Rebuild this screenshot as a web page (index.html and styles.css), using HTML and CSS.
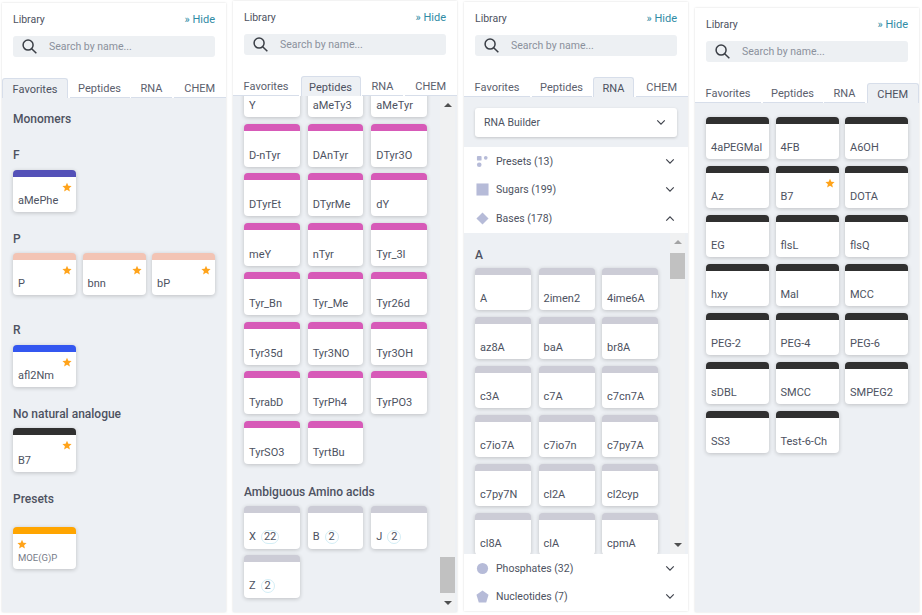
FILE: index.html
```html
<!DOCTYPE html>
<html lang="en">
    <head>
        <meta charset="UTF-8">
        <title>Library</title>
        <link rel="stylesheet" href="styles.css">
    </head>
    <body>
        <svg class="defs">
            <symbol id="star" viewBox="0 0 24 24"><path d="M12 1.5l3.2 7.2 7.8.8-5.9 5.2 1.8 7.8-6.9-4.1-6.9 4.1 1.8-7.8L1 9.5l7.8-.8z"/></symbol>
            <symbol id="search" viewBox="0 0 18 18"><circle cx="7.3" cy="7.3" r="6"/><path d="M11.6 11.6l5.6 5.6"/></symbol>
            <symbol id="down" viewBox="0 0 12 8"><path d="M1.5 1.5L6 6l4.5-4.5"/></symbol>
            <symbol id="up" viewBox="0 0 12 8"><path d="M1.5 6.5L6 2l4.5 4.5"/></symbol>
        </svg>

        <!-- Favorites -->
        <section class="panel panel-favorites">
            <header class="panel-header">
                <div class="title-row"><span>Library</span><a class="hide">» Hide</a></div>
                <div class="search"><svg class="search-icon"><use href="#search"/></svg><span>Search by name...</span></div>
            </header>
            <nav class="tabs">
                <div class="tab active">Favorites</div>
                <div class="tab">Peptides</div>
                <div class="tab">RNA</div>
                <div class="tab">CHEM</div>
            </nav>
            <div class="content fav-content">
                <h3 class="section-title">Monomers</h3>
                <h3 class="group-title first">F</h3>
                <div class="cards wide">
                    <div class="card bar-indigo"><svg class="star"><use href="#star"/></svg><span>aMePhe</span></div>
                </div>
                <h3 class="group-title">P</h3>
                <div class="cards wide">
                    <div class="card bar-salmon"><svg class="star"><use href="#star"/></svg><span>P</span></div>
                    <div class="card bar-salmon"><svg class="star"><use href="#star"/></svg><span>bnn</span></div>
                    <div class="card bar-salmon"><svg class="star"><use href="#star"/></svg><span>bP</span></div>
                </div>
                <h3 class="group-title far">R</h3>
                <div class="cards wide">
                    <div class="card bar-blue"><svg class="star"><use href="#star"/></svg><span>afl2Nm</span></div>
                </div>
                <h3 class="group-title">No natural analogue</h3>
                <div class="cards wide">
                    <div class="card bar-dark tall"><svg class="star"><use href="#star"/></svg><span>B7</span></div>
                </div>
                <h3 class="group-title">Presets</h3>
                <div class="cards wide presets">
                    <div class="card bar-orange preset"><svg class="star left"><use href="#star"/></svg><span>MOE(G)P</span></div>
                </div>
            </div>
        </section>

        <!-- Peptides -->
        <section class="panel panel-peptides">
            <header class="panel-header">
                <div class="title-row"><span>Library</span><a class="hide">» Hide</a></div>
                <div class="search"><svg class="search-icon"><use href="#search"/></svg><span>Search by name...</span></div>
            </header>
            <nav class="tabs">
                <div class="tab">Favorites</div>
                <div class="tab active">Peptides</div>
                <div class="tab">RNA</div>
                <div class="tab">CHEM</div>
            </nav>
            <div class="scroll-area">
                <div class="scroll-list pep-list">
                    <div class="cards narrow pep-cards">
                        <div class="card bar-pink"><span>Y</span></div>
                        <div class="card bar-pink"><span>aMeTy3</span></div>
                        <div class="card bar-pink"><span>aMeTyr</span></div>
                        <div class="card bar-pink"><span>D-nTyr</span></div>
                        <div class="card bar-pink"><span>DAnTyr</span></div>
                        <div class="card bar-pink"><span>DTyr3O</span></div>
                        <div class="card bar-pink"><span>DTyrEt</span></div>
                        <div class="card bar-pink"><span>DTyrMe</span></div>
                        <div class="card bar-pink"><span>dY</span></div>
                        <div class="card bar-pink"><span>meY</span></div>
                        <div class="card bar-pink"><span>nTyr</span></div>
                        <div class="card bar-pink"><span>Tyr_3I</span></div>
                        <div class="card bar-pink"><span>Tyr_Bn</span></div>
                        <div class="card bar-pink"><span>Tyr_Me</span></div>
                        <div class="card bar-pink"><span>Tyr26d</span></div>
                        <div class="card bar-pink"><span>Tyr35d</span></div>
                        <div class="card bar-pink"><span>Tyr3NO</span></div>
                        <div class="card bar-pink"><span>Tyr3OH</span></div>
                        <div class="card bar-pink"><span>TyrabD</span></div>
                        <div class="card bar-pink"><span>TyrPh4</span></div>
                        <div class="card bar-pink"><span>TyrPO3</span></div>
                        <div class="card bar-pink"><span>TyrSO3</span></div>
                        <div class="card bar-pink"><span>TyrtBu</span></div>
                    </div>
                    <h3 class="group-title ambiguous">Ambiguous Amino acids</h3>
                    <div class="cards narrow pep-cards">
                        <div class="card bar-gray"><span>X<b class="count">22</b></span></div>
                        <div class="card bar-gray"><span>B<b class="count">2</b></span></div>
                        <div class="card bar-gray"><span>J<b class="count">2</b></span></div>
                        <div class="card bar-gray"><span>Z<b class="count">2</b></span></div>
                    </div>
                </div>
                <div class="scrollbar">
                    <i class="arrow-up"></i>
                    <div class="track track-end"><div class="thumb"></div></div>
                    <i class="arrow-down"></i>
                </div>
            </div>
        </section>

        <!-- RNA -->
        <section class="panel panel-rna">
            <header class="panel-header">
                <div class="title-row"><span>Library</span><a class="hide">» Hide</a></div>
                <div class="search"><svg class="search-icon"><use href="#search"/></svg><span>Search by name...</span></div>
            </header>
            <nav class="tabs">
                <div class="tab">Favorites</div>
                <div class="tab">Peptides</div>
                <div class="tab active">RNA</div>
                <div class="tab">CHEM</div>
            </nav>
            <div class="builder">
                <div class="dropdown"><span>RNA Builder</span><svg class="chevron"><use href="#down"/></svg></div>
            </div>
            <div class="acc-row">
                <svg class="acc-icon" viewBox="0 0 14 14"><rect x="1" y="1" width="5" height="5" rx="1"/><circle cx="10.5" cy="3" r="2"/><circle cx="3.5" cy="10.5" r="2.5"/></svg>
                <span>Presets (13)</span><svg class="chevron"><use href="#down"/></svg>
            </div>
            <div class="acc-row">
                <svg class="acc-icon" viewBox="0 0 14 14"><rect x="0.5" y="0.5" width="13" height="13"/></svg>
                <span>Sugars (199)</span><svg class="chevron"><use href="#down"/></svg>
            </div>
            <div class="acc-row">
                <svg class="acc-icon" viewBox="0 0 14 14"><path d="M7 0.5L13.5 7 7 13.5 0.5 7z"/></svg>
                <span>Bases (178)</span><svg class="chevron"><use href="#up"/></svg>
            </div>
            <div class="scroll-area rna-area">
                <div class="scroll-list rna-list">
                    <h3 class="group-title rna-title">A</h3>
                    <div class="cards narrow rna-cards">
                        <div class="card bar-gray"><span>A</span></div>
                        <div class="card bar-gray"><span>2imen2</span></div>
                        <div class="card bar-gray"><span>4ime6A</span></div>
                        <div class="card bar-gray"><span>az8A</span></div>
                        <div class="card bar-gray"><span>baA</span></div>
                        <div class="card bar-gray"><span>br8A</span></div>
                        <div class="card bar-gray"><span>c3A</span></div>
                        <div class="card bar-gray"><span>c7A</span></div>
                        <div class="card bar-gray"><span>c7cn7A</span></div>
                        <div class="card bar-gray"><span>c7io7A</span></div>
                        <div class="card bar-gray"><span>c7io7n</span></div>
                        <div class="card bar-gray"><span>c7py7A</span></div>
                        <div class="card bar-gray"><span>c7py7N</span></div>
                        <div class="card bar-gray"><span>cl2A</span></div>
                        <div class="card bar-gray"><span>cl2cyp</span></div>
                        <div class="card bar-gray"><span>cl8A</span></div>
                        <div class="card bar-gray"><span>clA</span></div>
                        <div class="card bar-gray"><span>cpmA</span></div>
                    </div>
                </div>
                <div class="scrollbar">
                    <i class="arrow-up"></i>
                    <div class="track"><div class="thumb"></div></div>
                    <i class="arrow-down"></i>
                </div>
            </div>
            <div class="acc-row">
                <svg class="acc-icon" viewBox="0 0 14 14"><circle cx="7" cy="7" r="6"/></svg>
                <span>Phosphates (32)</span><svg class="chevron"><use href="#down"/></svg>
            </div>
            <div class="acc-row">
                <svg class="acc-icon" viewBox="0 0 14 14"><path d="M7 0.5L13.5 5.2 11 13.5H3L0.5 5.2z"/></svg>
                <span>Nucleotides (7)</span><svg class="chevron"><use href="#down"/></svg>
            </div>
        </section>

        <!-- CHEM -->
        <section class="panel panel-chem">
            <header class="panel-header">
                <div class="title-row"><span>Library</span><a class="hide">» Hide</a></div>
                <div class="search"><svg class="search-icon"><use href="#search"/></svg><span>Search by name...</span></div>
            </header>
            <nav class="tabs">
                <div class="tab">Favorites</div>
                <div class="tab">Peptides</div>
                <div class="tab">RNA</div>
                <div class="tab active">CHEM</div>
            </nav>
            <div class="content chem-content">
                <div class="cards wide chem-cards">
                    <div class="card bar-dark"><span>4aPEGMal</span></div>
                    <div class="card bar-dark"><span>4FB</span></div>
                    <div class="card bar-dark"><span>A6OH</span></div>
                    <div class="card bar-dark"><span>Az</span></div>
                    <div class="card bar-dark"><svg class="star"><use href="#star"/></svg><span>B7</span></div>
                    <div class="card bar-dark"><span>DOTA</span></div>
                    <div class="card bar-dark"><span>EG</span></div>
                    <div class="card bar-dark"><span>flsL</span></div>
                    <div class="card bar-dark"><span>flsQ</span></div>
                    <div class="card bar-dark"><span>hxy</span></div>
                    <div class="card bar-dark"><span>Mal</span></div>
                    <div class="card bar-dark"><span>MCC</span></div>
                    <div class="card bar-dark"><span>PEG-2</span></div>
                    <div class="card bar-dark"><span>PEG-4</span></div>
                    <div class="card bar-dark"><span>PEG-6</span></div>
                    <div class="card bar-dark"><span>sDBL</span></div>
                    <div class="card bar-dark"><span>SMCC</span></div>
                    <div class="card bar-dark"><span>SMPEG2</span></div>
                    <div class="card bar-dark"><span>SS3</span></div>
                    <div class="card bar-dark"><span>Test-6-Ch</span></div>
                </div>
            </div>
        </section>
    </body>
</html>
```

FILE: styles.css
```css
* {
    box-sizing: border-box;
}

html, body {
    height: 100%;
}

body {
    margin: 0;
    padding-left: 2px;
    display: flex;
    align-items: flex-start;
    gap: 7px;
    overflow: hidden;
    background-color: #fff;
    color: #4d5261;
    font-family: Roboto, "Liberation Sans", sans-serif;
    font-size: 11px;
}

.defs {
    display: none;
}

/* panels */
.panel {
    width: 224px;
    display: flex;
    flex-direction: column;
    overflow: hidden;
    background-color: #edf0f4;
    box-shadow: 0 0 2px rgba(0, 0, 0, 0.15);
}

.panel-favorites {
    margin-top: 3px;
    height: 609px;
}

.panel-peptides {
    margin-top: 1px;
    height: 611px;
}

.panel-rna {
    margin-top: 2px;
    height: 609px;
}

.panel-chem {
    margin-top: 8px;
    height: 604px;
}

.panel-header {
    flex: none;
    height: 75px;
    padding: 9px 11px 0;
    background-color: #fff;
}

.title-row {
    display: flex;
    justify-content: space-between;
    align-items: center;
    height: 14px;
    font-size: 10.5px;
}

.hide {
    color: #2f8ba5;
    font-size: 11px;
}

.search {
    display: flex;
    align-items: center;
    height: 21px;
    margin-top: 10px;
    padding-left: 9px;
    background-color: #edf0f3;
    border-radius: 3px;
    color: #8b909c;
    font-size: 10.5px;
}

.search-icon {
    width: 15px;
    height: 15px;
    margin-right: 12px;
    fill: none;
    stroke: #3b3f46;
    stroke-width: 1.8;
}

/* tabs */
.tabs {
    flex: none;
    display: grid;
    grid-template-columns: 66px 60px 41px 1fr;
    gap: 1.5px;
    height: 20px;
    background-color: #fff;
}

.tab {
    display: flex;
    justify-content: center;
    align-items: center;
    padding-top: 2px;
    border-bottom: 1px solid #d7deea;
    color: #5b606d;
    font-size: 11px;
}

.tab.active {
    background-color: #edf0f4;
    border: 1px solid #d7deea;
    border-bottom: none;
    border-radius: 3px 3px 0 0;
    color: #4d5261;
}

/* cards */
.content {
    flex: 1;
    padding: 0 11px;
}

.fav-content {
    padding-top: 14px;
}

.chem-content {
    padding-top: 14px;
}

.section-title,
.group-title {
    margin: 0;
    height: 14px;
    line-height: 14px;
    font-size: 12px;
    font-weight: 500;
}

.group-title {
    margin-top: 20px;
    margin-bottom: 7px;
}

.group-title.first {
    margin-top: 22px;
    margin-bottom: 8px;
}

.group-title.far {
    margin-top: 28px;
    margin-bottom: 8px;
}

.cards {
    display: grid;
    grid-template-columns: repeat(3, 1fr);
}

.cards.wide {
    column-gap: 6.5px;
    row-gap: 7px;
}

.cards.narrow {
    column-gap: 8px;
}

.presets {
    margin-top: 21px;
}

.card {
    position: relative;
    display: flex;
    align-items: flex-end;
    height: 42px;
    padding: 0 5px 5px;
    background-color: #fff;
    border-top: 7px solid #999;
    border-radius: 4px;
    box-shadow: 0 1px 4px rgba(0, 0, 0, 0.2);
    font-size: 11px;
    line-height: 12px;
    white-space: nowrap;
}

.card.tall {
    height: 44px;
}

.card.preset {
    color: #777c88;
    font-size: 9.5px;
}

.bar-indigo { border-top-color: #5451b8; }
.bar-salmon { border-top-color: #f3c4b4; }
.bar-blue { border-top-color: #3457f0; }
.bar-dark { border-top-color: #303030; }
.bar-orange { border-top-color: #ffa500; }
.bar-pink { border-top-color: #d75ab8; }
.bar-gray { border-top-color: #ccccd6; }

.star {
    position: absolute;
    top: 5px;
    right: 4px;
    width: 10px;
    height: 10px;
    fill: #ffa31a;
}

.star.left {
    left: 4px;
    right: auto;
}

.count {
    display: inline-block;
    min-width: 14px;
    height: 14px;
    margin-left: 5px;
    padding: 0 2px;
    border: 1.5px solid #d3eef6;
    border-radius: 7px;
    font-weight: 400;
    line-height: 11px;
    text-align: center;
}

/* scrolled lists with the browser-like scrollbar */
.scroll-area {
    flex: 1;
    min-height: 0;
    display: flex;
    overflow: hidden;
}

.scroll-list {
    flex: 1;
    min-width: 0;
}

.pep-list {
    padding-left: 11px;
    padding-right: 13px;
}

.pep-cards {
    row-gap: 6.5px;
}

.pep-cards .card {
    height: 43px;
}

.pep-cards:first-child {
    margin-top: -22px;
}

.ambiguous {
    margin-top: 21px;
}

.scrollbar {
    flex: none;
    width: 15px;
    margin-right: 2px;
    display: flex;
    flex-direction: column;
    align-items: center;
    background-color: #f0f1f2;
}

.track {
    flex: 1;
    width: 100%;
    display: flex;
    flex-direction: column;
    padding-top: 2px;
}

.track-end {
    justify-content: flex-end;
    padding: 0 0 1px;
}

.thumb {
    height: 36px;
    background-color: #c1c1c1;
}

.rna-area .thumb {
    height: 26px;
}

.arrow-up,
.arrow-down {
    flex: none;
    width: 0;
    height: 0;
    margin: 7px 0;
    border-left: 4px solid transparent;
    border-right: 4px solid transparent;
}

.arrow-up {
    border-bottom: 4px solid #505050;
}

.arrow-down {
    border-top: 4px solid #505050;
}

.rna-area .arrow-up {
    border-bottom-color: #a3a3a3;
}

/* RNA tab */
.builder {
    flex: none;
    height: 50px;
    padding: 11px 11px 10px;
}

.dropdown {
    display: flex;
    justify-content: space-between;
    align-items: center;
    height: 29px;
    padding: 0 11px 0 9px;
    background-color: #fff;
    border-radius: 3px;
    box-shadow: 0 1px 3px rgba(0, 0, 0, 0.18);
    font-size: 10.5px;
}

.chevron {
    width: 10px;
    height: 7px;
    fill: none;
    stroke: #3f434c;
    stroke-width: 1.4;
}

.acc-row {
    flex: none;
    display: flex;
    align-items: center;
    height: 28.5px;
    padding: 0 13px 0 12px;
    background-color: #fff;
    font-size: 10.5px;
}

.acc-row span {
    flex: 1;
}

.acc-icon {
    width: 13px;
    height: 13px;
    margin-right: 7px;
    fill: #b6bbd8;
}

.rna-list {
    padding-left: 11px;
    padding-right: 12px;
}

.rna-title {
    margin-top: 15px;
    margin-bottom: 6px;
}

.cards.rna-cards {
    column-gap: 7.5px;
    row-gap: 7px;
}

.rna-area .scrollbar {
    margin-right: 3px;
}
```
